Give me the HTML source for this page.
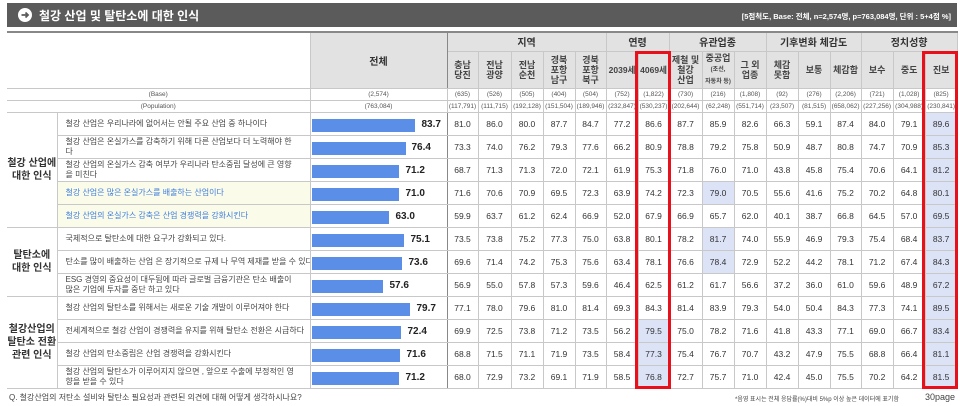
<!DOCTYPE html>
<html><head><meta charset="utf-8"><style>
*{box-sizing:border-box;margin:0;padding:0}
body{width:960px;height:406px;background:#fff;font-family:"Liberation Sans","Noto Sans CJK KR",sans-serif;color:#333;position:relative;overflow:hidden}
.title{position:absolute;left:7px;top:3px;width:950px;height:24px;background:#5b5b5b;color:#fff}
.title .t{position:absolute;left:32px;top:4px;font-size:12px;font-weight:bold}
.title svg{position:absolute;left:11px;top:5px}
.title .r{position:absolute;right:6px;top:8px;font-size:7.5px;font-weight:bold}
table{position:absolute;left:7px;top:31px;border-collapse:collapse;table-layout:fixed;width:950px}
td{border:1px solid #c8c8c8;text-align:center;vertical-align:middle;padding:0;font-size:8.5px;overflow:hidden;white-space:nowrap}
tr.h1 td{height:19px;background:#e2e2e2;font-size:10px;font-weight:bold;border-top:2px solid #888}
tr.h2 td{height:37px;background:#e2e2e2;font-size:9px;line-height:10px;font-weight:bold;color:#444}
tr.sm td{height:12px;font-size:6.5px;color:#555}
tr.d td{height:23px}
td.q{text-align:left;padding-left:8px;padding-right:14px;font-size:8px;line-height:10px;white-space:normal;color:#444}
td.cat{font-size:10px;font-weight:bold;line-height:13px;color:#333;border-left:none}
td.tot{position:relative;text-align:left;border-right:1px solid #888}
.bar{position:absolute;left:1px;top:6px;height:13px;background:#5b8ee6}
.v{position:absolute;top:6px;font-size:10px;font-weight:bold;color:#222}
.b{background:#dce3f7}
tr.y td.q{background:#fbfbe9;color:#3f7ee0}
tr.g td{border-top:1px solid #888}
.red{position:absolute;border:3px solid #e8101a;top:51px;height:338px}
.foot{position:absolute;top:392px;font-size:8px;color:#444}
</style></head><body>
<div class="title"><svg width="14" height="14" viewBox="0 0 14 14"><circle cx="7" cy="7" r="7" fill="#fff"/><path d="M3.5 7H10M7.5 4.5L10 7L7.5 9.5" stroke="#5b5b5b" stroke-width="1.8" fill="none"/></svg><div class="t">철강 산업 및 탈탄소에 대한 인식</div><div class="r">[5점척도, Base: 전체, n=2,574명, p=763,084명, 단위 : 5+4점 %]</div></div>
<table>
<colgroup><col style="width:50px"><col style="width:253px"><col style="width:137px"><col style="width:31px"><col style="width:33px"><col style="width:32px"><col style="width:32px"><col style="width:31px"><col style="width:32px"><col style="width:31px"><col style="width:33px"><col style="width:32px"><col style="width:32px"><col style="width:32px"><col style="width:32px"><col style="width:31px"><col style="width:32px"><col style="width:32px"><col style="width:32px"></colgroup>
<tr class="h1"><td colspan="2" rowspan="2" style="background:#fff;border-left:none"></td><td rowspan="2" style="border-right:1px solid #888">전체</td><td colspan="5">지역</td><td colspan="2">연령</td><td colspan="3">유관업종</td><td colspan="3">기후변화 체감도</td><td colspan="3">정치성향</td></tr>
<tr class="h2"><td>충남<br>당진</td><td>전남<br>광양</td><td>전남<br>순천</td><td>경북<br>포항<br>남구</td><td>경북<br>포항<br>북구</td><td style="font-size:8.5px">2039세</td><td style="font-size:8.5px">4069세</td><td>제철 및<br>철강<br>산업</td><td>중공업<br><span style="font-size:6px">(조선,<br>자동차 등)</span></td><td>그 외<br>업종</td><td>체감<br>못함</td><td>보통</td><td>체감함</td><td>보수</td><td>중도</td><td>진보</td></tr>
<tr class="sm"><td colspan="2" style="border-left:none">(Base)</td><td>(2,574)</td><td>(635)</td><td>(526)</td><td>(505)</td><td>(404)</td><td>(504)</td><td>(752)</td><td>(1,822)</td><td>(730)</td><td>(216)</td><td>(1,808)</td><td>(92)</td><td>(276)</td><td>(2,206)</td><td>(721)</td><td>(1,028)</td><td>(825)</td></tr>
<tr class="sm"><td colspan="2" style="border-left:none">(Population)</td><td>(763,084)</td><td>(117,791)</td><td>(111,715)</td><td>(192,128)</td><td>(151,504)</td><td>(189,946)</td><td>(232,847)</td><td>(530,237)</td><td>(202,644)</td><td>(62,248)</td><td>(551,714)</td><td>(23,507)</td><td>(81,515)</td><td>(658,062)</td><td>(227,256)</td><td>(304,988)</td><td>(230,841)</td></tr>
<tr class="d g"><td class="cat" rowspan="5">철강 산업에<br>대한 인식</td><td class="q">철강 산업은 우리나라에 없어서는 안될 주요 산업 중 하나이다</td><td class="tot"><div class="bar" style="width:103px"></div><div class="v" style="left:111px">83.7</div></td><td>81.0</td><td>86.0</td><td>80.0</td><td>87.7</td><td>84.7</td><td>77.2</td><td>86.6</td><td>87.7</td><td>85.9</td><td>82.6</td><td>66.3</td><td>59.1</td><td>87.4</td><td>84.0</td><td>79.1</td><td class="b">89.6</td></tr>
<tr class="d"><td class="q">철강 산업은 온실가스를 감축하기 위해 다른 산업보다 더 노력해야 한다</td><td class="tot"><div class="bar" style="width:94px"></div><div class="v" style="left:101px">76.4</div></td><td>73.3</td><td>74.0</td><td>76.2</td><td>79.3</td><td>77.6</td><td>66.2</td><td>80.9</td><td>78.8</td><td>79.2</td><td>75.8</td><td>50.9</td><td>48.7</td><td>80.8</td><td>74.7</td><td>70.9</td><td class="b">85.3</td></tr>
<tr class="d"><td class="q">철강 산업의 온실가스 감축 여부가 우리나라 탄소중립 달성에 큰 영향을 미친다</td><td class="tot"><div class="bar" style="width:87px"></div><div class="v" style="left:95px">71.2</div></td><td>68.7</td><td>71.3</td><td>71.3</td><td>72.0</td><td>72.1</td><td>61.9</td><td>75.3</td><td>71.8</td><td>76.0</td><td>71.0</td><td>43.8</td><td>45.8</td><td>75.4</td><td>70.6</td><td>64.1</td><td class="b">81.2</td></tr>
<tr class="d y"><td class="q">철강 산업은 많은 온실가스를 배출하는 산업이다</td><td class="tot"><div class="bar" style="width:87px"></div><div class="v" style="left:95px">71.0</div></td><td>71.6</td><td>70.6</td><td>70.9</td><td>69.5</td><td>72.3</td><td>63.9</td><td>74.2</td><td>72.3</td><td class="b">79.0</td><td>70.5</td><td>55.6</td><td>41.6</td><td>75.2</td><td>70.2</td><td>64.8</td><td class="b">80.1</td></tr>
<tr class="d y"><td class="q">철강 산업의 온실가스 감축은 산업 경쟁력을 강화시킨다</td><td class="tot"><div class="bar" style="width:77px"></div><div class="v" style="left:85px">63.0</div></td><td>59.9</td><td>63.7</td><td>61.2</td><td>62.4</td><td>66.9</td><td>52.0</td><td>67.9</td><td>66.9</td><td>65.7</td><td>62.0</td><td>40.1</td><td>38.7</td><td>66.8</td><td>64.5</td><td>57.0</td><td class="b">69.5</td></tr>
<tr class="d g"><td class="cat" rowspan="3">탈탄소에<br>대한 인식</td><td class="q">국제적으로 탈탄소에 대한 요구가 강화되고 있다.</td><td class="tot"><div class="bar" style="width:92px"></div><div class="v" style="left:100px">75.1</div></td><td>73.5</td><td>73.8</td><td>75.2</td><td>77.3</td><td>75.0</td><td>63.8</td><td>80.1</td><td>78.2</td><td class="b">81.7</td><td>74.0</td><td>55.9</td><td>46.9</td><td>79.3</td><td>75.4</td><td>68.4</td><td class="b">83.7</td></tr>
<tr class="d"><td class="q" style="white-space:nowrap">탄소를 많이 배출하는 산업 은 장기적으로 규제 나 무역 제재를 받을 수 있다</td><td class="tot"><div class="bar" style="width:90px"></div><div class="v" style="left:98px">73.6</div></td><td>69.6</td><td>71.4</td><td>74.2</td><td>75.3</td><td>75.6</td><td>63.4</td><td>78.1</td><td>76.6</td><td class="b">78.4</td><td>72.9</td><td>52.2</td><td>44.2</td><td>78.1</td><td>71.2</td><td>67.4</td><td class="b">84.3</td></tr>
<tr class="d"><td class="q">ESG 경영의 중요성이 대두됨에 따라 글로벌 금융기관은 탄소 배출이 많은 기업에 투자를 중단 하고 있다</td><td class="tot"><div class="bar" style="width:71px"></div><div class="v" style="left:79px">57.6</div></td><td>56.9</td><td>55.0</td><td>57.8</td><td>57.3</td><td>59.6</td><td>46.4</td><td>62.5</td><td>61.2</td><td>61.7</td><td>56.6</td><td>37.2</td><td>36.0</td><td>61.0</td><td>59.6</td><td>48.9</td><td class="b">67.2</td></tr>
<tr class="d g"><td class="cat" rowspan="4">철강산업의<br>탈탄소 전환<br>관련 인식</td><td class="q">철강 산업의 탈탄소를 위해서는 새로운 기술 개발이 이루어져야 한다</td><td class="tot"><div class="bar" style="width:98px"></div><div class="v" style="left:106px">79.7</div></td><td>77.1</td><td>78.0</td><td>79.6</td><td>81.0</td><td>81.4</td><td>69.3</td><td>84.3</td><td>81.4</td><td>83.9</td><td>79.3</td><td>54.0</td><td>50.4</td><td>84.3</td><td>77.3</td><td>74.1</td><td class="b">89.5</td></tr>
<tr class="d"><td class="q" style="white-space:nowrap">전세계적으로 철강 산업이 경쟁력을 유지를 위해 탈탄소 전환은 시급하다</td><td class="tot"><div class="bar" style="width:89px"></div><div class="v" style="left:97px">72.4</div></td><td>69.9</td><td>72.5</td><td>73.8</td><td>71.2</td><td>73.5</td><td>56.2</td><td class="b">79.5</td><td>75.0</td><td>78.2</td><td>71.6</td><td>41.8</td><td>43.3</td><td>77.1</td><td>69.0</td><td>66.7</td><td class="b">83.4</td></tr>
<tr class="d"><td class="q">철강 산업의 탄소중립은 산업 경쟁력을 강화시킨다</td><td class="tot"><div class="bar" style="width:88px"></div><div class="v" style="left:96px">71.6</div></td><td>68.8</td><td>71.5</td><td>71.1</td><td>71.9</td><td>73.5</td><td>58.4</td><td class="b">77.3</td><td>75.4</td><td>76.7</td><td>70.7</td><td>43.2</td><td>47.9</td><td>75.5</td><td>68.8</td><td>66.4</td><td class="b">81.1</td></tr>
<tr class="d"><td class="q">철강 산업의 탈탄소가 이루어지지 않으면 , 앞으로 수출에 부정적인 영향을 받을 수 있다</td><td class="tot"><div class="bar" style="width:87px"></div><div class="v" style="left:95px">71.2</div></td><td>68.0</td><td>72.9</td><td>73.2</td><td>69.1</td><td>71.9</td><td>58.5</td><td class="b">76.8</td><td>72.7</td><td>75.7</td><td>71.0</td><td>42.4</td><td>45.0</td><td>75.5</td><td>70.2</td><td>64.2</td><td class="b">81.5</td></tr>
</table>
<div class="red" style="left:635px;width:36px"></div>
<div class="red" style="left:922px;width:36px"></div>
<div class="foot" style="left:9px">Q. 철강산업의 저탄소 설비와 탈탄소 필요성과 관련된 의견에 대해 어떻게 생각하시나요?</div>
<div class="foot" style="left:735px;top:394px;font-size:6px">*음영 표시는 전체 응답률(%)대비 5%p 이상 높은 데이터에 표기함</div>
<div class="foot" style="left:925px;font-size:9px">30page</div>
</body></html>
